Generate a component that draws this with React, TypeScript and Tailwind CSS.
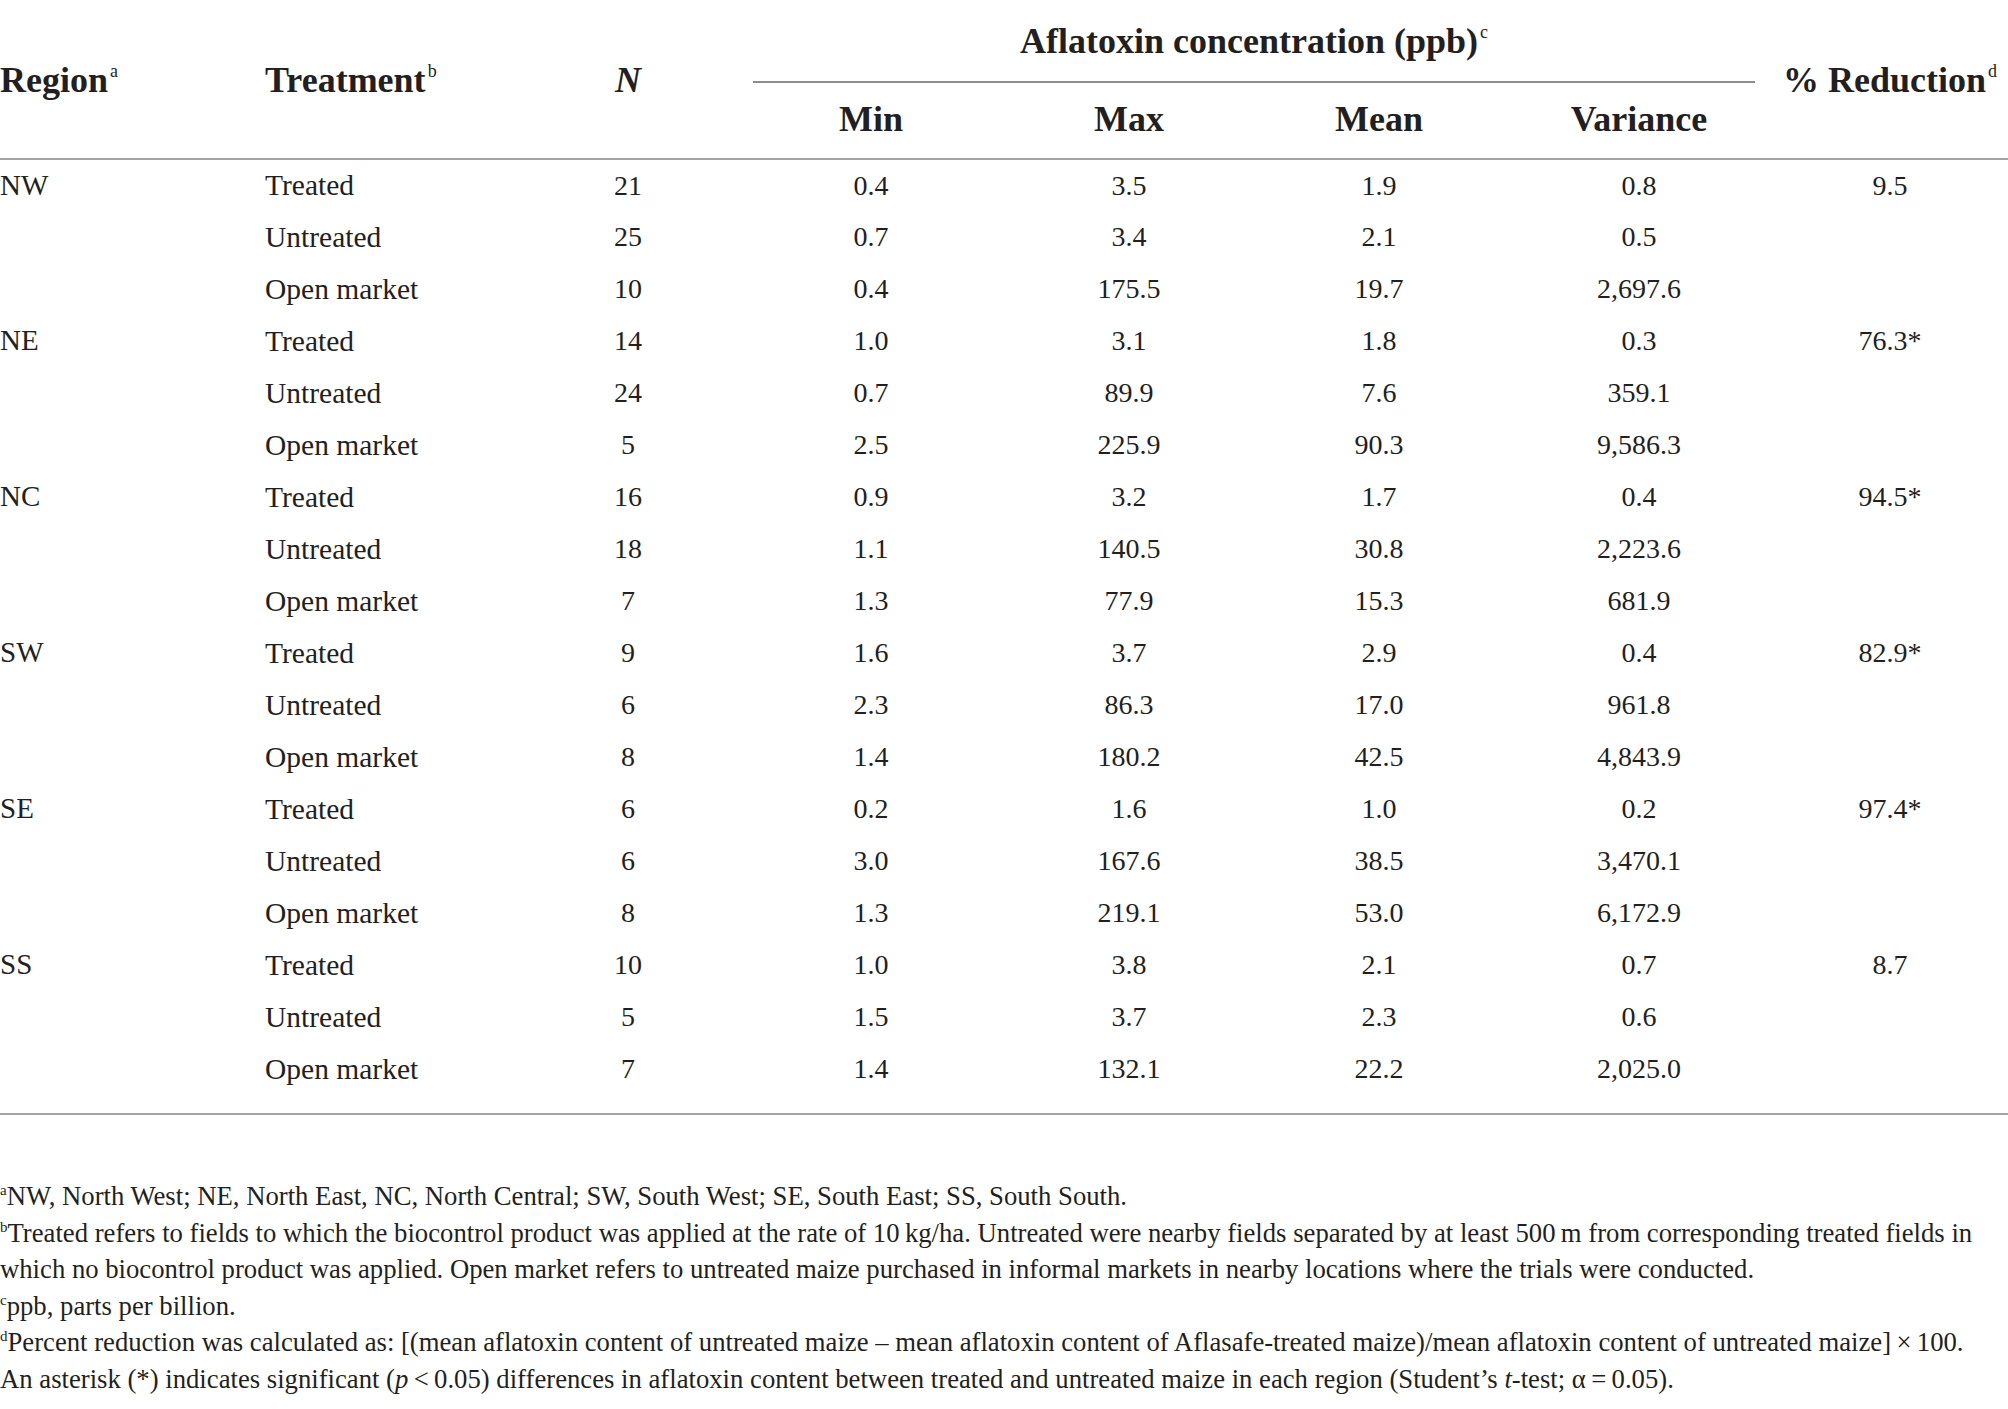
import React from 'react';

type Row = { region?: string; treatment: string; n: number; min: string; max: string; mean: string; variance: string; reduction?: string };

const rows: Row[] = [
    { region: 'NW', treatment: 'Treated', n: 21, min: '0.4', max: '3.5', mean: '1.9', variance: '0.8', reduction: '9.5' },
    { treatment: 'Untreated', n: 25, min: '0.7', max: '3.4', mean: '2.1', variance: '0.5' },
    { treatment: 'Open market', n: 10, min: '0.4', max: '175.5', mean: '19.7', variance: '2,697.6' },
    { region: 'NE', treatment: 'Treated', n: 14, min: '1.0', max: '3.1', mean: '1.8', variance: '0.3', reduction: '76.3*' },
    { treatment: 'Untreated', n: 24, min: '0.7', max: '89.9', mean: '7.6', variance: '359.1' },
    { treatment: 'Open market', n: 5, min: '2.5', max: '225.9', mean: '90.3', variance: '9,586.3' },
    { region: 'NC', treatment: 'Treated', n: 16, min: '0.9', max: '3.2', mean: '1.7', variance: '0.4', reduction: '94.5*' },
    { treatment: 'Untreated', n: 18, min: '1.1', max: '140.5', mean: '30.8', variance: '2,223.6' },
    { treatment: 'Open market', n: 7, min: '1.3', max: '77.9', mean: '15.3', variance: '681.9' },
    { region: 'SW', treatment: 'Treated', n: 9, min: '1.6', max: '3.7', mean: '2.9', variance: '0.4', reduction: '82.9*' },
    { treatment: 'Untreated', n: 6, min: '2.3', max: '86.3', mean: '17.0', variance: '961.8' },
    { treatment: 'Open market', n: 8, min: '1.4', max: '180.2', mean: '42.5', variance: '4,843.9' },
    { region: 'SE', treatment: 'Treated', n: 6, min: '0.2', max: '1.6', mean: '1.0', variance: '0.2', reduction: '97.4*' },
    { treatment: 'Untreated', n: 6, min: '3.0', max: '167.6', mean: '38.5', variance: '3,470.1' },
    { treatment: 'Open market', n: 8, min: '1.3', max: '219.1', mean: '53.0', variance: '6,172.9' },
    { region: 'SS', treatment: 'Treated', n: 10, min: '1.0', max: '3.8', mean: '2.1', variance: '0.7', reduction: '8.7' },
    { treatment: 'Untreated', n: 5, min: '1.5', max: '3.7', mean: '2.3', variance: '0.6' },
    { treatment: 'Open market', n: 7, min: '1.4', max: '132.1', mean: '22.2', variance: '2,025.0' },
];

// superscript marks in the header and footnotes (preflight resets sup, so raise by hand)
const Sup: React.FC<{ children: React.ReactNode }> = ({ children }) => (
    <sup className="text-[18px] font-normal relative -top-[15px] ml-[2px]">{children}</sup>
);

const Note: React.FC<{ children: React.ReactNode }> = ({ children }) => (
    <sup className="text-[15px] relative -top-[10px]">{children}</sup>
);

export default function App() {
    return (
        <div className="w-[2008px] h-[1409px] bg-white text-[#231f20] font-['Liberation_Serif',serif] overflow-hidden">
            <table className="w-full table-fixed border-collapse">
                <colgroup>
                    <col className="w-[265px]" />
                    <col className="w-[255px]" />
                    <col className="w-[216px]" />
                    <col className="w-[270px]" />
                    <col className="w-[246px]" />
                    <col className="w-[254px]" />
                    <col className="w-[266px]" />
                    <col className="w-[236px]" />
                </colgroup>
                <thead className="text-[36px] font-bold border-b-2 border-[#a3a3a3]">
                    <tr className="h-[83px]">
                        <th rowSpan={2} className="text-left align-middle font-bold pt-[2px]">Region<Sup>a</Sup></th>
                        <th rowSpan={2} className="text-left align-middle font-bold pt-[2px]">Treatment<Sup>b</Sup></th>
                        <th rowSpan={2} className="text-center align-middle font-bold italic pt-[2px]">N</th>
                        <th colSpan={4} className="p-0 align-bottom font-bold">
                            <div className="pb-[13px]">Aflatoxin concentration (ppb)<Sup>c</Sup></div>
                            <div className="mx-[17px] border-b-2 border-[#8c8c8c]"></div>
                        </th>
                        <th rowSpan={2} className="text-center align-middle font-bold pt-[2px]">% Reduction<Sup>d</Sup></th>
                    </tr>
                    <tr className="h-[76px]">
                        <th className="text-center font-bold pb-[4px]">Min</th>
                        <th className="text-center font-bold pb-[4px]">Max</th>
                        <th className="text-center font-bold pb-[4px]">Mean</th>
                        <th className="text-center font-bold pb-[4px]">Variance</th>
                    </tr>
                </thead>
                <tbody className="text-[28px]">
                    {rows.map((r, i) => (
                        <tr key={i} className="h-[52px]">
                            <td className="text-left text-[29px]">{r.region}</td>
                            <td className="text-left text-[29.5px]">{r.treatment}</td>
                            <td className="text-center">{r.n}</td>
                            <td className="text-center">{r.min}</td>
                            <td className="text-center">{r.max}</td>
                            <td className="text-center">{r.mean}</td>
                            <td className="text-center">{r.variance}</td>
                            <td className="text-center">{r.reduction}</td>
                        </tr>
                    ))}
                </tbody>
            </table>
            <div className="h-[20px] border-b-2 border-[#a3a3a3]"></div>

            <div className="pt-[63px] text-[26.7px] leading-[36.5px] whitespace-nowrap">
                <p><Note>a</Note>NW, North West; NE, North East, NC, North Central; SW, South West; SE, South East; SS, South South.</p>
                <p>
                    <Note>b</Note>Treated refers to fields to which the biocontrol product was applied at the rate of 10&#8201;kg/ha. Untreated were nearby fields separated by at least 500&#8201;m from corresponding treated fields in
                    <br />
                    which no biocontrol product was applied. Open market refers to untreated maize purchased in informal markets in nearby locations where the trials were conducted.
                </p>
                <p><Note>c</Note>ppb, parts per billion.</p>
                <p>
                    <Note>d</Note>Percent reduction was calculated as: [(mean aflatoxin content of untreated maize – mean aflatoxin content of Aflasafe-treated maize)/mean aflatoxin content of untreated maize]&#8201;×&#8201;100.
                    <br />
                    An asterisk (*) indicates significant (<i>p</i>&#8201;&lt;&#8201;0.05) differences in aflatoxin content between treated and untreated maize in each region (Student’s <i>t</i>-test; α&#8201;=&#8201;0.05).
                </p>
            </div>
        </div>
    );
}
